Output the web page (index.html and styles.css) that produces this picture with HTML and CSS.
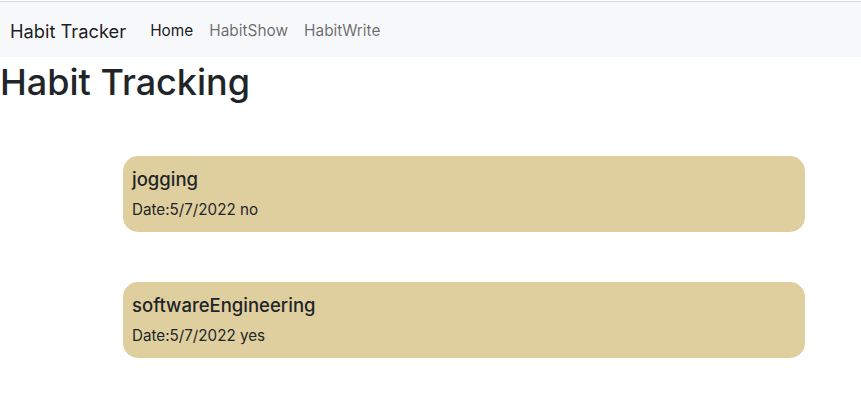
FILE: index.html
```html
<!DOCTYPE html>
<html>
<head>
<meta charset="utf-8">
<link rel="stylesheet" href="styles.css">
</head>
<body>
<nav class="navbar">
  <a class="brand">Habit Tracker</a>
  <ul class="nav">
    <li><a class="nav-link active">Home</a></li>
    <li><a class="nav-link">HabitShow</a></li>
    <li><a class="nav-link">HabitWrite</a></li>
  </ul>
</nav>
<h1 class="title">Habit Tracking</h1>
<div class="list">
  <div class="card">
    <h5 class="card-title">jogging</h5>
    <p class="card-text">Date:5/7/2022 no</p>
  </div>
  <div class="card">
    <h5 class="card-title">softwareEngineering</h5>
    <p class="card-text">Date:5/7/2022 yes</p>
  </div>
</div>
</body>
</html>
```

FILE: styles.css
```css
html, body {
  margin: 0;
  padding: 0;
}
body {
  font-family: Inter, "Noto Sans", sans-serif;
  font-size: 16px;
  color: #212529;
  background: #fff;
  border-top: 1px solid #fff;
}
.navbar {
  border-top: 1px solid #d5d6d8;
  background: #f7f8f9;
  height: 56px;
  box-sizing: border-box;
  display: flex;
  align-items: center;
  padding: 2px 10px 0;
}
.brand {
  font-size: 18.3px;
  color: rgba(0,0,0,.9);
  margin-right: 16px;
}
.nav {
  display: flex;
  list-style: none;
  margin: 0;
  padding: 0;
}
.nav-link {
  display: block;
  padding: 0 8px;
  font-size: 15.4px;
  color: rgba(0,0,0,.58);
}
.nav-link.active {
  color: rgba(0,0,0,.9);
}
.title {
  margin: 0;
  font-size: 36px;
  font-weight: 500;
  line-height: 1.2;
  padding-top: 4px;
}
.list {
  display: flex;
  flex-direction: column;
  gap: 50px;
  padding: 52px 0 0 123px;
  width: 682px;
}
.card {
  background: #e0cf9e;
  border-radius: 15px;
  height: 76px;
  box-sizing: border-box;
  padding: 12px 9px;
}
.card-title {
  margin: 0;
  font-size: 18.5px;
  font-weight: 500;
  line-height: 22px;
}
.card-text {
  margin: 10px 0 0;
  font-size: 15.2px;
  line-height: 20px;
}
```
